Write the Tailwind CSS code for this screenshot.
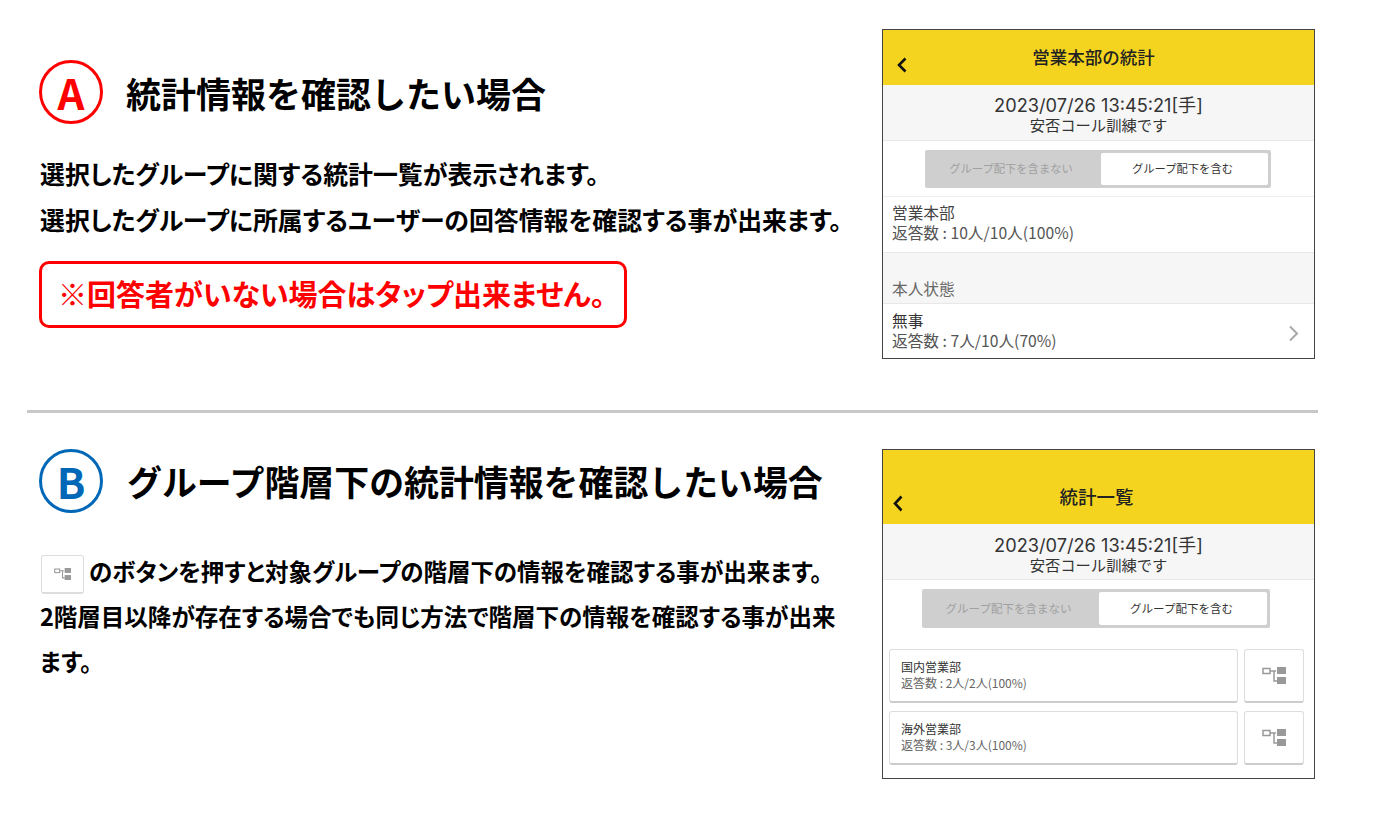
<!DOCTYPE html>
<html lang="ja">
<head>
  <meta charset="UTF-8" />
  <title>統計情報</title>
  <script src="https://cdn.jsdelivr.net/npm/@tailwindcss/browser@4"></script>
</head>
<body class="bg-white text-black w-[1400px] h-[819px] overflow-hidden font-['Noto_Sans_CJK_JP',sans-serif]">

  <!-- A -->
  <section class="flex pl-[39px] pt-[29px]">
    <div class="w-[843px] pt-[31px] shrink-0">
      <div class="flex items-center gap-[23px] h-[64px]">
        <div class="w-[64px] h-[64px] rounded-full border-[3px] border-[#ff0000] flex items-center justify-center text-[#ff0000] text-[42px] font-semibold leading-none">A</div>
        <h1 class="text-[35px] font-bold leading-none">統計情報を確認したい場合</h1>
      </div>
      <p class="mt-[26px] pl-[1px] text-[24.9px] leading-[46px] font-semibold [font-feature-settings:'palt'] whitespace-nowrap">選択したグループに関する統計一覧が表示されます。<br>選択したグループに所属するユーザーの回答情報を確認する事が出来ます。</p>
      <div class="mt-[19px] w-[588px] h-[67px] border-[3px] border-[#ff0000] rounded-[10px] flex items-center pl-[16px] pb-[2px] text-[#ff0000] text-[29px] font-bold [font-feature-settings:'palt'] whitespace-nowrap">※回答者がいない場合はタップ出来ません。</div>
    </div>

    <div class="w-[433px] h-[330px] border-[1.5px] border-[#444] shrink-0 flex flex-col overflow-hidden">
      <div class="h-[55px] bg-[#f5d41f] relative flex justify-center pt-[13px] pr-[10px] text-[17.5px] leading-[28px] font-medium text-[#222]">
        <svg class="absolute left-[14px] top-[27px]" width="10" height="16" viewBox="0 0 10 16" fill="none" stroke="#111" stroke-width="2.6"><path d="M8.5 1.500 2 8l6.500 6.500"/></svg>
        営業本部の統計
      </div>
      <div class="h-[56px] bg-[#f6f6f6] border-b border-[#e8e8e8] flex flex-col items-center justify-center pt-[4px] text-[#333] text-[15.3px] leading-[19px]">
        <div class="font-['Inter','Noto_Sans_CJK_JP',sans-serif] text-[18.2px]">2023/07/26 13:45:21[手]</div>
        <div>安否コール訓練です</div>
      </div>
      <div class="h-[56px] flex justify-center items-center border-b border-[#eee] pr-[1px]">
        <div class="w-[346px] h-[38px] bg-[#cfcfcf] rounded-[2px] flex text-[11.3px] p-[3px]">
          <div class="w-[173px] flex items-center justify-center text-[#a0a0a0] pr-[7px]">グループ配下を含まない</div>
          <div class="flex-1 bg-white rounded-[2px] flex items-center justify-center pr-[4px] text-[#333]">グループ配下を含む</div>
        </div>
      </div>
      <div class="h-[55px] px-[9px] pb-[3px] flex flex-col justify-center text-[15.7px] leading-[20px] text-[#555]">
        <div class="text-[#444]">営業本部</div>
        <div>返答数 : 10人/10人(100%)</div>
      </div>
      <div class="h-[52px] bg-[#f6f6f6] border-y border-[#e8e8e8] px-[9px] flex items-end pb-[4px] text-[15.7px] leading-[20px] text-[#666]">本人状態</div>
      <div class="flex-1 px-[9px] flex items-center justify-between text-[15.7px] leading-[20px] text-[#555]">
        <div class="pb-[1px]">
          <div class="text-[#333]">無事</div>
          <div>返答数 : 7人/10人(70%)</div>
        </div>
        <svg class="mr-[6px] mt-[4px]" width="11" height="17" viewBox="0 0 11 17" fill="none" stroke="#a8a8a8" stroke-width="2"><path d="m2 1.500 7 7-7 7"/></svg>
      </div>
    </div>
  </section>

  <div class="mt-[51px] ml-[27px] w-[1291px] h-[3px] bg-[#c8c8c8]"></div>

  <!-- B -->
  <section class="flex pl-[39px] pt-[36px]">
    <div class="w-[843px] shrink-0">
      <div class="flex items-center gap-[24px] h-[64px]">
        <div class="w-[64px] h-[64px] rounded-full border-[3px] border-[#0068b7] flex items-center justify-center text-[#0068b7] text-[42px] font-semibold leading-none">B</div>
        <h1 class="text-[34.9px] font-bold leading-none whitespace-nowrap">グループ階層下の統計情報を確認したい場合</h1>
      </div>
      <p class="mt-[36px] pl-[1px] text-[23.5px] leading-[45px] font-semibold [font-feature-settings:'palt'] whitespace-nowrap">
        <span class="inline-flex align-middle w-[43px] h-[39px] ml-[1px] mr-[5px] items-center justify-center border border-[#ddd] border-b-2 rounded-[3px]">
          <svg width="17" height="12" viewBox="0 0 24 17" fill="none"><rect x="1" y="1.500" width="7" height="5" stroke="#999" stroke-width="1.500"/><path d="M8 4h6M12 4v10h3" stroke="#999" stroke-width="1.500"/><rect x="15" y="0" width="9" height="7" fill="#999"/><rect x="15" y="10" width="9" height="7" fill="#999"/></svg>
        </span>のボタンを押すと対象グループの階層下の情報を確認する事が出来ます。<br>2階層目以降が存在する場合でも同じ方法で階層下の情報を確認する事が出来<br>ます。
      </p>
    </div>

    <div class="w-[433px] h-[330px] border-[1.5px] border-[#444] shrink-0 flex flex-col overflow-hidden">
      <div class="h-[74px] bg-[#f5d41f] relative flex justify-center pt-[32px] pr-[4px] text-[18.5px] leading-[28px] font-medium text-[#222]">
        <svg class="absolute left-[10px] top-[45px]" width="10" height="17" viewBox="0 0 10 17" fill="none" stroke="#111" stroke-width="2.6"><path d="M8.5 1.500 2 8.500l6.500 7"/></svg>
        統計一覧
      </div>
      <div class="h-[56px] bg-[#f6f6f6] border-b border-[#e8e8e8] flex flex-col items-center justify-center pt-[7px] text-[#333] text-[15.3px] leading-[19px]">
        <div class="font-['Inter','Noto_Sans_CJK_JP',sans-serif] text-[18.2px]">2023/07/26 13:45:21[手]</div>
        <div>安否コール訓練です</div>
      </div>
      <div class="pt-[9px] flex justify-center pr-[6px]">
        <div class="w-[348px] h-[39px] bg-[#cfcfcf] rounded-[2px] flex text-[11.5px] p-[3px]">
          <div class="w-[174px] flex items-center justify-center text-[#a0a0a0] pr-[6px]">グループ配下を含まない</div>
          <div class="flex-1 bg-white rounded-[2px] flex items-center justify-center pr-[2px] text-[#333]">グループ配下を含む</div>
        </div>
      </div>
      <div class="mt-[21px] px-[6px] flex flex-col gap-[8px]">
        <div class="flex gap-[6px]">
          <div class="w-[349px] h-[54px] border border-[#ddd] border-b-2 border-b-[#ccc] rounded-[3px] px-[11px] pb-[1px] flex flex-col justify-center text-[12px] leading-[16px] text-[#666]">
            <div class="text-[#333]">国内営業部</div>
            <div>返答数 : 2人/2人(100%)</div>
          </div>
          <div class="w-[60px] h-[54px] border border-[#ddd] border-b-2 border-b-[#ccc] rounded-[3px] flex items-center justify-center">
            <svg width="24" height="17" viewBox="0 0 24 17" fill="none"><rect x="1" y="1.500" width="7" height="5" stroke="#999" stroke-width="1.500"/><path d="M8 4h6M12 4v10h3" stroke="#999" stroke-width="1.500"/><rect x="15" y="0" width="9" height="7" fill="#999"/><rect x="15" y="10" width="9" height="7" fill="#999"/></svg>
          </div>
        </div>
        <div class="flex gap-[6px]">
          <div class="w-[349px] h-[54px] border border-[#ddd] border-b-2 border-b-[#ccc] rounded-[3px] px-[11px] pb-[1px] flex flex-col justify-center text-[12px] leading-[16px] text-[#666]">
            <div class="text-[#333]">海外営業部</div>
            <div>返答数 : 3人/3人(100%)</div>
          </div>
          <div class="w-[60px] h-[54px] border border-[#ddd] border-b-2 border-b-[#ccc] rounded-[3px] flex items-center justify-center">
            <svg width="24" height="17" viewBox="0 0 24 17" fill="none"><rect x="1" y="1.500" width="7" height="5" stroke="#999" stroke-width="1.500"/><path d="M8 4h6M12 4v10h3" stroke="#999" stroke-width="1.500"/><rect x="15" y="0" width="9" height="7" fill="#999"/><rect x="15" y="10" width="9" height="7" fill="#999"/></svg>
          </div>
        </div>
      </div>
    </div>
  </section>
</body>
</html>
